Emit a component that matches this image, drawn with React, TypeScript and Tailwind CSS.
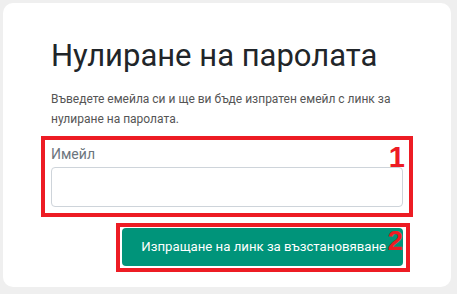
export default function App() {
  return (
    <div className="h-[294px] w-[457px] bg-[#efefef] pl-[3px] pt-[3px] font-['Roboto',sans-serif]">
      <div className="h-[284px] w-[448px] rounded-[10px] bg-white px-[48px] pt-[34px]">
        <h1 className="text-[31px] font-normal leading-[38px] text-[#212529]">Нулиране на паролата</h1>
        <p className="mt-[14px] text-[12px] leading-[20px] text-[#555]">
          Въведете емейла си и ще ви бъде изпратен емейл с линк за нулиране на паролата.
        </p>

        {/* annotation 1 */}
        <div className="relative mx-[-10px] mt-[7px] border-4 border-[#ed1c24] px-[6px] pt-[4px] pb-[6px]">
          <label className="block text-[14px] leading-[20px] text-[#6c757d]">Имейл</label>
          <input className="mt-[3px] block h-[40px] w-full rounded-[4px] border border-[#ced4da] bg-white" />
          <span className="absolute top-[3px] right-[4px] font-['Liberation_Sans',sans-serif] text-[29px] font-bold leading-none text-[#ed1c24]">
            1
          </span>
        </div>

        {/* annotation 2 */}
        <div className="mr-[-7px] mt-[6px] flex justify-end">
          <div className="relative border-4 border-[#ed1c24] pt-[1px] pr-[3px] pb-[2px] pl-[2px]">
            <button className="h-[38px] rounded-[4px] bg-[#00947a] pr-[17px] pl-[19px] text-[13.2px] text-white">
              Изпращане на линк за възстановяване
            </button>
            <span className="absolute top-0 right-[3px] font-['Liberation_Sans',sans-serif] text-[28px] font-bold leading-none text-[#ed1c24]">
              2
            </span>
          </div>
        </div>
      </div>
    </div>
  )
}
